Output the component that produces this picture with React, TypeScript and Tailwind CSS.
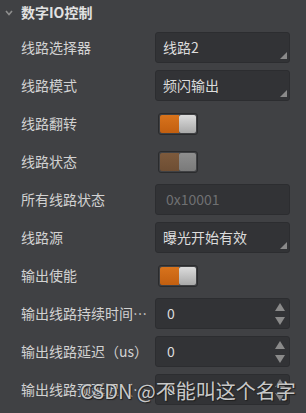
import React from 'react';

type Row =
  | { label: string; kind: 'select'; value: string }
  | { label: string; kind: 'text'; value: string }
  | { label: string; kind: 'number'; value: string }
  | { label: string; kind: 'toggle'; on: boolean; disabled?: boolean };

const rows: Row[] = [
  { label: '线路选择器', kind: 'select', value: '线路2' },
  { label: '线路模式', kind: 'select', value: '频闪输出' },
  { label: '线路翻转', kind: 'toggle', on: true },
  { label: '线路状态', kind: 'toggle', on: true, disabled: true },
  { label: '所有线路状态', kind: 'text', value: '0x10001' },
  { label: '线路源', kind: 'select', value: '曝光开始有效' },
  { label: '输出使能', kind: 'toggle', on: true },
  { label: '输出线路持续时间（us）', kind: 'number', value: '0' },
  { label: '输出线路延迟（us）', kind: 'number', value: '0' },
  { label: '输出线路预延迟（us）', kind: 'number', value: '0' },
];

const Toggle: React.FC<{ disabled?: boolean }> = ({ disabled }) => (
  <div className="ml-[3px] flex h-[22px] w-[40px] shrink-0 rounded-[3px] border border-[#2a2b2d] p-px">
    <div
      className={
        disabled
          ? 'flex-1 rounded-l-[2px] bg-gradient-to-b from-[#7d5a3c] to-[#6e4e33]'
          : 'flex-1 rounded-l-[2px] bg-gradient-to-b from-[#d8731c] to-[#c25f10]'
      }
    />
    <div
      className={
        disabled
          ? 'w-[17px] rounded-[2px] bg-gradient-to-b from-[#8e8e8e] to-[#7a7a7a]'
          : 'w-[17px] rounded-[2px] bg-gradient-to-b from-[#dcdcdc] to-[#a9a9a9]'
      }
    />
  </div>
);

const Field: React.FC<{ row: Row }> = ({ row }) => {
  if (row.kind === 'toggle') return <Toggle disabled={row.disabled} />;
  const disabled = row.kind === 'text';
  return (
    <div className="relative flex h-[31px] w-[135px] shrink-0 items-center rounded-[3px] border border-[#2c2d30] bg-[#323336]">
      <span
        className={
          row.kind === 'select'
            ? 'pl-[7px] text-[14px] text-[#dcdcdc]'
            : disabled
              ? 'pl-[10px] text-[14px] text-[#6f7072]'
              : 'pl-[11px] text-[14px] text-[#dcdcdc]'
        }
      >
        {row.value}
      </span>
      {row.kind === 'select' && (
        <svg className="absolute bottom-[3px] right-[2px]" width="7" height="7" viewBox="0 0 7 7">
          <polygon points="7,0 7,7 0,7" fill="#8a8a8a" />
        </svg>
      )}
      {row.kind === 'number' && (
        <div className="absolute right-[4px] top-[4px] flex flex-col gap-[6px]">
          <svg width="10" height="8" viewBox="0 0 10 8">
            <polygon points="5,0 10,8 0,8" fill="#8a8a8a" />
          </svg>
          <svg width="10" height="8" viewBox="0 0 10 8">
            <polygon points="0,0 10,0 5,8" fill="#8a8a8a" />
          </svg>
        </div>
      )}
    </div>
  );
};

export default function App() {
  return (
    <div
      className="relative h-[413px] w-[306px] overflow-hidden bg-[#404144]"
      style={{ fontFamily: '"Microsoft YaHei", "Noto Sans CJK SC", "Noto Sans", sans-serif' }}
    >
      <div className="flex h-[25px] items-center pl-[5px]">
        <svg width="8" height="6" viewBox="0 0 8 6" className="mt-px">
          <polyline points="1,1 4,4.5 7,1" fill="none" stroke="#8e8e8e" strokeWidth="1.6" />
        </svg>
        <span className="ml-[8px] text-[14px] font-bold text-[#e2e2e2]">数字IO控制</span>
      </div>
      <div className="flex flex-col gap-[7px] pt-[7px]">
        {rows.map((row) => (
          <div key={row.label} className="flex h-[31px] items-center">
            <span className="w-[155px] shrink-0 truncate pl-[21px] pr-[6px] text-[14px] text-[#d2d2d2]">
              {row.label}
            </span>
            <Field row={row} />
          </div>
        ))}
      </div>
      <div
        className="absolute left-[80px] top-[376px] whitespace-nowrap text-[20px] text-[#c8c8c8]"
        style={{ textShadow: '1px 1px 1px #1e1e1e, -1px 0 1px #2a2a2a' }}
      >
        CSDN @不能叫这个名字
      </div>
    </div>
  );
}
